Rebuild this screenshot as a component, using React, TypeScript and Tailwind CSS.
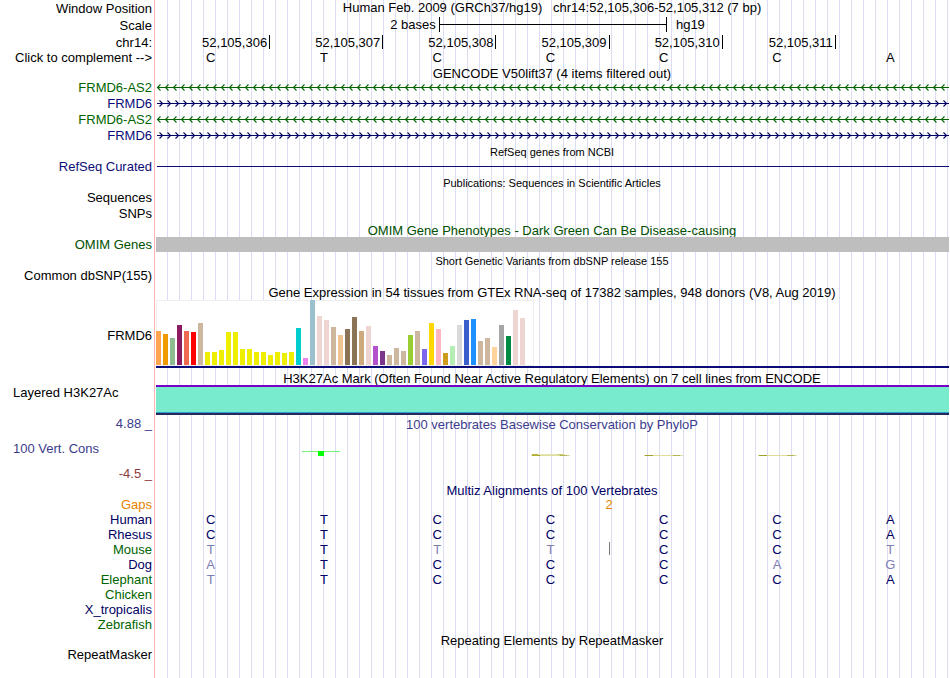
import { useState, type ReactNode } from "react"
import clsx from "clsx"

const sequence = ["C", "T", "C", "C", "C", "C", "A"]
const complements: Record<string, string> = { A: "T", T: "A", C: "G", G: "C" }

const positions = [
  "52,105,306",
  "52,105,307",
  "52,105,308",
  "52,105,309",
  "52,105,310",
  "52,105,311",
]

const genes = [
  { id: 1, name: "FRMD6-AS2", strand: "-" },
  { id: 2, name: "FRMD6", strand: "+" },
  { id: 3, name: "FRMD6-AS2", strand: "-" },
  { id: 4, name: "FRMD6", strand: "+" },
]

// [height, color] for each GTEx tissue
const tissues: [number, string][] = [
  [34, "#FFA54F"],
  [31, "#EE9A00"],
  [27, "#8FBC8F"],
  [40, "#8B1C62"],
  [34, "#EE6A50"],
  [33, "#FF0000"],
  [42, "#CDB79E"],
  [13, "#EEEE00"],
  [13, "#EEEE00"],
  [15, "#EEEE00"],
  [33, "#EEEE00"],
  [33, "#EEEE00"],
  [16, "#EEEE00"],
  [16, "#EEEE00"],
  [13, "#EEEE00"],
  [13, "#EEEE00"],
  [10, "#EEEE00"],
  [13, "#EEEE00"],
  [12, "#EEEE00"],
  [13, "#EEEE00"],
  [37, "#00CDCD"],
  [7, "#EE82EE"],
  [65, "#9AC0CD"],
  [49, "#EED5D2"],
  [45, "#EED5D2"],
  [38, "#CDB79E"],
  [30, "#EEC591"],
  [36, "#8B7355"],
  [48, "#8B7355"],
  [34, "#CDAA7D"],
  [39, "#EED5D2"],
  [19, "#B452CD"],
  [14, "#7A378B"],
  [10, "#CDB79E"],
  [17, "#CDB79E"],
  [14, "#CDB79E"],
  [30, "#9ACD32"],
  [34, "#CDB79E"],
  [16, "#7A67EE"],
  [42, "#FFD700"],
  [36, "#FFB6C1"],
  [12, "#CD9B1D"],
  [19, "#B4EEB4"],
  [40, "#D9D9D9"],
  [45, "#3A5FCD"],
  [46, "#1E90FF"],
  [24, "#CDB79E"],
  [27, "#CDB79E"],
  [18, "#FFD39B"],
  [40, "#A6A6A6"],
  [29, "#008B45"],
  [55, "#EED5D2"],
  [47, "#EED5D2"],
  [0, "#FF00FF"],
]

const species = [
  { name: "Human", color: "text-[#000064]", bases: "CTCCCCA" },
  { name: "Rhesus", color: "text-[#000064]", bases: "CTCCCCA" },
  { name: "Mouse", color: "text-[#006400]", bases: "TTTTCCT", insert: true },
  { name: "Dog", color: "text-[#000064]", bases: "ATCCCAG" },
  { name: "Elephant", color: "text-[#006400]", bases: "TTCCCCA" },
  { name: "Chicken", color: "text-[#006400]", bases: "" },
  { name: "X_tropicalis", color: "text-[#000064]", bases: "" },
  { name: "Zebrafish", color: "text-[#006400]", bases: "" },
]

type RowProps = {
  label?: ReactNode
  labelClass?: string
  className?: string
  children?: ReactNode
}

function Row({ label, labelClass, className = "h-4", children }: RowProps) {
  return (
    <div className={clsx("flex", className)}>
      <div
        className={clsx(
          "flex w-[154px] shrink-0 items-center whitespace-nowrap",
          labelClass?.includes("justify-") ? "pl-[13px]" : "justify-end pr-[2px]",
          labelClass
        )}
      >
        {label}
      </div>
      <div className="flex min-w-0 flex-1 flex-col justify-center overflow-x-clip">
        {children}
      </div>
    </div>
  )
}

function Title({ children, className }: { children: ReactNode; className?: string }) {
  return (
    <h2
      className={clsx("pl-px text-center whitespace-pre", className ?? "pt-0.5 text-[13px]")}
    >
      {children}
    </h2>
  )
}

function Bases({ children }: { children: ReactNode }) {
  return <div className="grid grid-cols-7 pr-[2px] text-center">{children}</div>
}

function Strand({ id, forward }: { id: string; forward: boolean }) {
  const color = forward ? "#000064" : "#006400"
  return (
    <svg className="ml-[2px] h-[7px] w-full" aria-hidden="true">
      <defs>
        <pattern id={id} width="8" height="7" patternUnits="userSpaceOnUse">
          <path
            d={forward ? "M3.5 .5 L6.5 3.5 L3.5 6.5" : "M4.5 .5 L1.5 3.5 L4.5 6.5"}
            fill="none"
            stroke={color}
            strokeWidth="1.1"
          />
        </pattern>
      </defs>
      <rect width="100%" height="7" fill={`url(#${id})`} />
      <rect x="1" y="3" width="100%" height="1" fill={color} />
    </svg>
  )
}

function ConservationMark({ thick }: { thick?: boolean }) {
  return (
    <svg className="mx-auto h-5 w-[39px]" viewBox="0 0 39 20" aria-hidden="true">
      <rect y="16" width="39" height="1" fill="#dcdc9c" />
      <rect x="1" y="16" width="8" height="1" fill="#a0a028" />
      <rect x="29" y="16" width="7" height="1" fill="#b4b450" />
      {thick && (
        <>
          <rect x="1" y="15" width="33" height="1" fill="#e6e6b4" />
          <rect x="1" y="15" width="6" height="2" fill="#b4b43c" />
          <rect x="27" y="15" width="5" height="1" fill="#c8c86e" />
        </>
      )}
    </svg>
  )
}

export default function App() {
  const [complement, setComplement] = useState(false)

  return (
    <main className="min-h-screen bg-white pr-px font-['Liberation_Sans',Arial,sans-serif] text-[13px] leading-[15px] text-black">
      <div className="flex min-h-screen flex-col bg-[linear-gradient(#ffb4b4,#ffb4b4),repeating-linear-gradient(to_right,transparent_0_11px,#dcdcf5_11px_12px)] bg-[length:1px_100%,100%_100%] bg-[position:154px_0,156px_0] bg-no-repeat">
        <Row label="Window Position" className="h-[17px]">
          <h1 className="pb-0.5 pl-px text-center whitespace-pre">
            {"Human Feb. 2009 (GRCh37/hg19)   chr14:52,105,306-52,105,312 (7 bp)"}
          </h1>
        </Row>
        <Row label="Scale" className="h-[17px]">
          <div className="flex items-center justify-center pr-2 pb-0.5">
            <span className="pr-[3px]">2 bases</span>
            <div className="flex h-[15px] w-[29%] items-center border-x border-black">
              <div className="h-px w-full bg-black" />
            </div>
            <span className="pl-[9px]">hg19</span>
          </div>
        </Row>
        <Row label="chr14:">
          <div className="grid grid-cols-7 pl-[3px] text-right">
            {positions.map((position) => (
              <div key={position} className="h-[14px] border-r border-black pr-[2px]">
                {position}
              </div>
            ))}
          </div>
        </Row>
        <Row
          className="h-[15px]"
          label={
            <button
              type="button"
              className="cursor-pointer"
              onClick={() => setComplement(!complement)}
            >
              {"Click to complement -->"}
            </button>
          }
        >
          <Bases>
            {sequence.map((base, i) => (
              <span key={i}>{complement ? complements[base] : base}</span>
            ))}
          </Bases>
        </Row>

        <Row className="h-[14px]">
          <Title>GENCODE V50lift37 (4 items filtered out)</Title>
        </Row>
        {genes.map((gene) => (
          <Row
            key={gene.id}
            label={gene.name}
            labelClass={gene.strand === "+" ? "text-[#0c0c78]" : "text-[#006400]"}
          >
            <Strand id={`strand-${gene.id}`} forward={gene.strand === "+"} />
          </Row>
        ))}

        <Row className="h-[15px]">
          <Title className="pt-1 text-[11px]">RefSeq genes from NCBI</Title>
        </Row>
        <Row label="RefSeq Curated" labelClass="text-[#0c0c78]">
          <div className="ml-[3px] h-px bg-[#0c0c78]" />
        </Row>

        <Row className="h-[15px]">
          <Title className="pt-1 text-[11px]">
            Publications: Sequences in Scientific Articles
          </Title>
        </Row>
        <Row label="Sequences" />
        <Row label="SNPs" />

        <Row>
          <Title className="pt-0.5 text-[13px] text-[#005000]">
            OMIM Gene Phenotypes - Dark Green Can Be Disease-causing
          </Title>
        </Row>
        <Row label="OMIM Genes" labelClass="text-[#005000]" className="h-[15px]">
          <div className="relative ml-[2px] h-full bg-[#bebebe]" />
        </Row>

        <Row>
          <Title className="pt-0.5 text-[11px]">
            Short Genetic Variants from dbSNP release 155
          </Title>
        </Row>
        <Row label="Common dbSNP(155)" className="h-[15px]" />

        <Row className="h-[17px]">
          <Title>
            Gene Expression in 54 tissues from GTEx RNA-seq of 17382 samples, 948 donors (V8, Aug 2019)
          </Title>
        </Row>
        <Row label="FRMD6" labelClass="pt-0.5" className="h-[68px]">
          <div className="ml-[2px] border-b-2 border-[#0c0c78]">
            <div className="flex h-[66px] w-[378px] items-end gap-[2px] bg-white pb-px shadow-[inset_0_0_0_1px_#eeeeee]">
              {tissues.map(([height, color], i) => (
                <div
                  key={i}
                  className="w-[5px] shrink-0"
                  style={{ height, backgroundColor: color }}
                />
              ))}
            </div>
          </div>
        </Row>

        <Row className="h-[17px]">
          <Title className="pt-1 text-[13px]">
            H3K27Ac Mark (Often Found Near Active Regulatory Elements) on 7 cell lines from ENCODE
          </Title>
        </Row>
        <Row
          label="Layered H3K27Ac"
          labelClass="justify-start pb-4"
          className="h-[30px]"
        >
          <div className="relative ml-[2px] flex h-full flex-col">
            <div className="h-[2px] bg-[#7800c8]" />
            <div className="flex-1 bg-[#78ebcd]" />
            <div className="h-px bg-[#28a0d2]" />
            <div className="h-[2px] bg-[#28285a]" />
          </div>
        </Row>

        <Row label="4.88 _" labelClass="text-[#3c3c8c] pb-0.5" className="h-[18px]">
          <Title className="text-[13px] text-[#3c3c8c]">
            100 vertebrates Basewise Conservation by PhyloP
          </Title>
        </Row>
        <Row
          label="100 Vert. Cons"
          labelClass="justify-start pb-0.5 text-[#3c3c8c]"
          className="h-8"
        >
          <Bases>
            <span />
            <svg className="mx-auto h-5 w-[44px]" viewBox="0 0 44 20" aria-hidden="true">
              <rect y="12" width="38" height="1" fill="#78f078" />
              <rect x="16" y="12" width="6" height="5" fill="#00ff00" />
            </svg>
            <span />
            <ConservationMark thick />
            <ConservationMark />
            <ConservationMark />
          </Bases>
        </Row>
        <Row label="-4.5 _" labelClass="text-[#8c3c3c]" className="h-[17px]" />

        <Row className="h-[15px]">
          <Title className="pt-0.5 text-[13px] text-[#000064]">
            Multiz Alignments of 100 Vertebrates
          </Title>
        </Row>
        <Row label="Gaps" labelClass="text-[#e68200]" className="h-[15px]">
          <Bases>
            <span className="relative col-start-4 h-[15px]">
              <span className="absolute -right-0.5 translate-x-1/2 text-[#e68200]">2</span>
            </span>
          </Bases>
        </Row>
        {species.map(({ name, color, bases, insert }) => (
          <Row key={name} label={name} labelClass={color} className="h-[15px]">
            <Bases>
              {bases.split("").map((base, i) => (
                <span
                  key={i}
                  className={clsx(
                    "relative",
                    base === sequence[i] ? "text-[#000064]" : "text-[#7d7db4]"
                  )}
                >
                  {base}
                  {insert && i === 3 && (
                    <span className="absolute top-0 -right-[3px] h-[13px] w-px bg-[#787878]" />
                  )}
                </span>
              ))}
            </Bases>
          </Row>
        ))}

        <Row className="h-[15px]">
          <Title>Repeating Elements by RepeatMasker</Title>
        </Row>
        <Row label="RepeatMasker" labelClass="pb-0.5" />
      </div>
    </main>
  )
}
